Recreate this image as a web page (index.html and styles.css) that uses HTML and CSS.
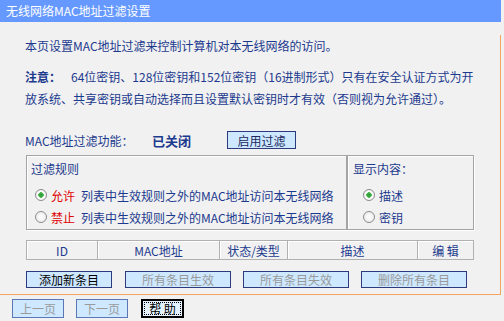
FILE: index.html
```html
<!DOCTYPE html>
<html lang="zh-CN">
<head>
<meta charset="UTF-8">
<title>无线网络MAC地址过滤设置</title>
<link rel="stylesheet" href="styles.css">
</head>
<body>
  <div class="title">无线网络MAC地址过滤设置</div>
  <div class="frame">
    <div class="content">
      <p class="intro">本页设置MAC地址过滤来控制计算机对本无线网络的访问。</p>
      <p class="note"><b class="note-head">注意：</b>64位密钥、128位密钥和152位密钥（16进制形式）只有在安全认证方式为开<br>放系统、共享密钥或自动选择而且设置默认密钥时才有效（否则视为允许通过）。</p>

      <div class="switch-row">
        <span class="switch-label">MAC地址过滤功能：</span>
        <span class="switch-state">已关闭</span>
        <button type="button" class="btn btn-enable">启用过滤</button>
      </div>

      <div class="rules">
        <div class="box rule-box">
          <div class="box-title">过滤规则</div>
          <label class="radio-row"><input type="radio" name="rule" checked><span class="red">允许</span>列表中生效规则之外的MAC地址访问本无线网络</label>
          <label class="radio-row"><input type="radio" name="rule"><span class="red">禁止</span>列表中生效规则之外的MAC地址访问本无线网络</label>
        </div>
        <div class="box show-box">
          <div class="box-title">显示内容：</div>
          <label class="radio-row"><input type="radio" name="show" checked>描述</label>
          <label class="radio-row"><input type="radio" name="show">密钥</label>
        </div>
      </div>

      <table class="list">
        <tr>
          <th class="c-id">ID</th>
          <th class="c-mac">MAC地址</th>
          <th class="c-state">状态/类型</th>
          <th class="c-desc">描述</th>
          <th class="c-edit">编&nbsp;辑</th>
        </tr>
      </table>

      <div class="actions">
        <button type="button" class="btn btn-add">添加新条目</button>
        <button type="button" class="btn btn-wide" disabled>所有条目生效</button>
        <button type="button" class="btn btn-wide" disabled>所有条目失效</button>
        <button type="button" class="btn btn-wide" disabled>删除所有条目</button>
      </div>
    </div>
  </div>

  <div class="pager">
    <button type="button" class="btn btn-page" disabled>上一页</button>
    <button type="button" class="btn btn-page" disabled>下一页</button>
    <button type="button" class="btn btn-help">帮&nbsp;助</button>
  </div>
</body>
</html>
```

FILE: styles.css
```css
body {
  margin: 0;
  background-color: #f1f1f1;
  color: #1c3a8e;
  font-family: "Noto Sans CJK SC", sans-serif;
  font-size: 12px;
}
p {
  margin: 0;
}
.title {
  width: 495px;
  height: 22px;
  line-height: 22px;
  padding-left: 6px;
  background-color: #6699ff;
  color: white;
}
.frame {
  width: 500px;
  border-right: 1px solid #f4a65e;
  border-bottom: 1px solid #f4a65e;
  padding-bottom: 6px;
}
.content {
  padding-left: 25px;
}
.intro {
  margin-top: 13px;
  line-height: 22px;
}
.note {
  margin-top: 9px;
  line-height: 22px;
  white-space: nowrap;
}
.note-head {
  margin-right: 10px;
}
.switch-row {
  display: flex;
  align-items: center;
  height: 18px;
  margin-top: 21px;
}
.switch-label {
  width: 127px;
}
.switch-state {
  width: 75px;
  font-size: 13px;
  font-weight: bold;
}
.btn {
  height: 17px;
  padding: 0;
  border: 1px solid #2c3a80;
  background-color: #cde8ff;
  color: #000;
  font-family: "Noto Sans CJK SC", sans-serif;
  font-size: 12px;
  line-height: 15px;
}
.btn:disabled {
  color: #9a9a9a;
}
.btn-enable {
  width: 69px;
  height: 18px;
  color: #1c2a60;
}
.rules {
  display: flex;
  width: 448px;
  margin: 6px 0 0 1px;
}
.box {
  box-sizing: border-box;
  height: 75px;
  padding: 2px 0 0 4px;
  border: 1px solid #a4a4a4;
  box-shadow: inset 1px 1px 0 #fff, 1px 1px 0 #fff;
}
.rule-box {
  width: 321px;
}
.show-box {
  width: 127px;
  padding-left: 5px;
}
.box-title {
  line-height: 22px;
  margin-bottom: 4px;
}
.radio-row {
  display: flex;
  align-items: center;
  height: 22px;
  padding-left: 4px;
  white-space: nowrap;
}
.radio-row input {
  appearance: none;
  width: 12px;
  height: 12px;
  margin: 0 4px 0 0;
  border: 1px solid #8c8c8c;
  border-radius: 50%;
  background: radial-gradient(circle, #fff 0, #e6e6e6 100%);
}
.radio-row input:checked {
  background: radial-gradient(circle, #2f9a36 0, #45b24a 2.5px, #fff 3px, #e6e6e6 100%);
}
.show-box .radio-row {
  padding-left: 10px;
}
.red {
  color: #e00000;
  margin-right: 6px;
}
.list {
  width: 448px;
  margin: 10px 0 0 1px;
  border-collapse: collapse;
}
.list th {
  height: 18px;
  padding: 0;
  border: 1px solid #b0b0b0;
  box-shadow: inset 1px 1px 0 #fff;
  font-weight: normal;
  text-align: center;
}
.c-id { width: 70px; }
.c-mac { width: 121px; }
.c-state { width: 67px; }
.c-desc { width: 129px; }
.actions {
  display: flex;
  gap: 12px;
  margin: 11px 0 0 1px;
}
.btn-add {
  width: 86px;
  margin-right: 1px;
}
.btn-wide {
  width: 106px;
}
.pager {
  display: flex;
  gap: 12px;
  padding: 4px 0 0 12px;
}
.btn-page {
  width: 52px;
  height: 19px;
  border-color: #5a78b8;
}
.btn-help {
  width: 43px;
  height: 19px;
  margin-left: 1px;
  border: 2px solid #000;
  outline: 1px dotted #000;
  outline-offset: -4px;
  background-color: #e4f2ff;
}
```
